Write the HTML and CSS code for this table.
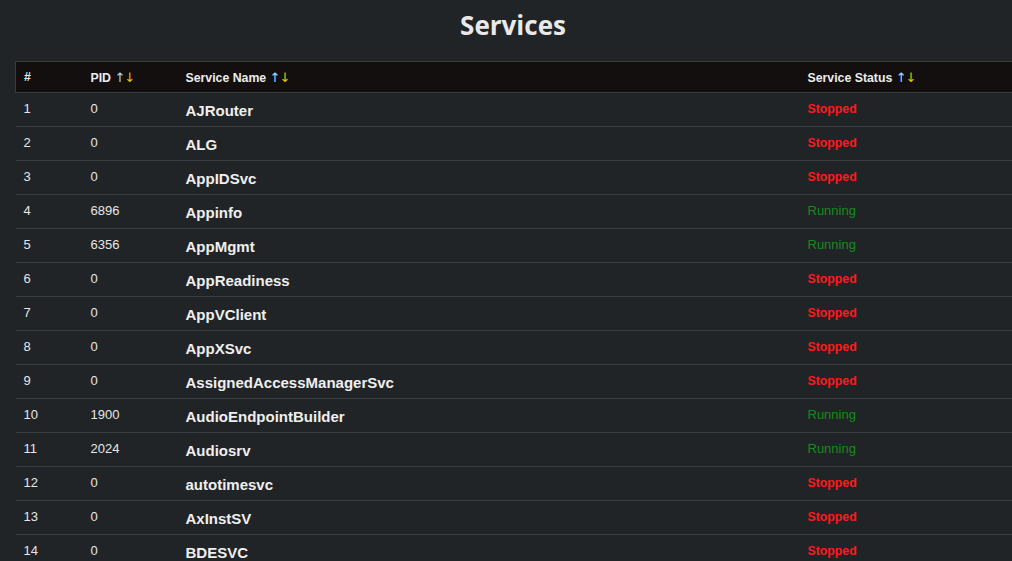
FILE: index.html
```html
<!DOCTYPE html>
<html>
<head>
<meta charset="utf-8">
<link rel="stylesheet" href="styles.css">
</head>
<body>
<div class="page">
  <h1 class="title">Services</h1>
  <table class="svc">
    <colgroup>
      <col class="c-num"><col class="c-pid"><col class="c-name"><col class="c-status">
    </colgroup>
    <thead>
      <tr>
        <th>#</th>
        <th>PID <span class="up">↑</span><span class="down">↓</span></th>
        <th>Service Name <span class="up">↑</span><span class="down">↓</span></th>
        <th>Service Status <span class="up">↑</span><span class="down">↓</span></th>
      </tr>
    </thead>
    <tbody>
      <tr><td>1</td><td>0</td><td class="name">AJRouter</td><td class="stopped">Stopped</td></tr>
      <tr><td>2</td><td>0</td><td class="name">ALG</td><td class="stopped">Stopped</td></tr>
      <tr><td>3</td><td>0</td><td class="name">AppIDSvc</td><td class="stopped">Stopped</td></tr>
      <tr><td>4</td><td>6896</td><td class="name">Appinfo</td><td class="running">Running</td></tr>
      <tr><td>5</td><td>6356</td><td class="name">AppMgmt</td><td class="running">Running</td></tr>
      <tr><td>6</td><td>0</td><td class="name">AppReadiness</td><td class="stopped">Stopped</td></tr>
      <tr><td>7</td><td>0</td><td class="name">AppVClient</td><td class="stopped">Stopped</td></tr>
      <tr><td>8</td><td>0</td><td class="name">AppXSvc</td><td class="stopped">Stopped</td></tr>
      <tr><td>9</td><td>0</td><td class="name">AssignedAccessManagerSvc</td><td class="stopped">Stopped</td></tr>
      <tr><td>10</td><td>1900</td><td class="name">AudioEndpointBuilder</td><td class="running">Running</td></tr>
      <tr><td>11</td><td>2024</td><td class="name">Audiosrv</td><td class="running">Running</td></tr>
      <tr><td>12</td><td>0</td><td class="name">autotimesvc</td><td class="stopped">Stopped</td></tr>
      <tr><td>13</td><td>0</td><td class="name">AxInstSV</td><td class="stopped">Stopped</td></tr>
      <tr><td>14</td><td>0</td><td class="name">BDESVC</td><td class="stopped">Stopped</td></tr>
    </tbody>
  </table>
</div>
</body>
</html>
```
FILE: styles.css
```css
html {
  overflow: hidden;
  background: #212427;
}
body {
  margin: 0;
  background: #212427;
  color: #e8e8e8;
  font-family: "Liberation Sans", Arial, sans-serif;
}
.page {
  width: 1026px;
}
.title {
  margin: 0;
  height: 61px;
  padding-top: 7px;
  box-sizing: border-box;
  text-align: center;
  font-family: "Open Sans", "DejaVu Sans", sans-serif;
  font-size: 26px;
  font-weight: 700;
  line-height: 36px;
  color: #e9e9e9;
}
.svc {
  margin-left: 15px;
  width: 1011px;
  border-collapse: collapse;
  table-layout: fixed;
}
.c-num { width: 67px; }
.c-pid { width: 95px; }
.c-name { width: 622px; }
.svc thead tr {
  background: #120f0e;
  border-top: 1px solid #393c3f;
  border-left: 1px solid #393c3f;
  border-bottom: 1px solid #393c3f;
}
.svc th {
  height: 30px;
  padding: 0 0 0 8px;
  text-align: left;
  font-size: 12.3px;
  font-weight: 700;
  color: #ececec;
  vertical-align: middle;
}
.svc th .up,
.svc th .down {
  font-family: "DejaVu Sans", sans-serif;
  font-weight: 400;
  font-size: 13px;
}
.svc th .up { color: #a8dcff; }
.svc th .down { color: #e3c400; margin-left: -1px; }
.svc td {
  height: 31px;
  padding: 0 0 2px 8px;
  font-size: 13px;
  color: #e6e6e6;
  vertical-align: middle;
  border-bottom: 1px solid #3a3d40;
}
.svc td.name {
  height: 32px;
  font-size: 15px;
  font-weight: 700;
  color: #efefef;
  padding: 1px 0 0 8px;
}
.svc td.stopped {
  font-size: 12.3px;
  color: #ff1a1a;
  font-weight: 700;
}
.svc td.running {
  color: #148c1b;
}
```
